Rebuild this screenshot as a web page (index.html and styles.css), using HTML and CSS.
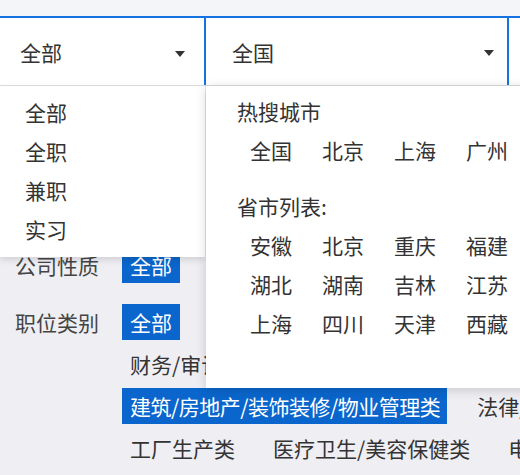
FILE: index.html
```html
<!DOCTYPE html>
<html lang="zh-CN">
<head>
<meta charset="utf-8">
<title>职位筛选</title>
<link rel="stylesheet" href="styles.css">
</head>
<body>
<div class="page">
  <div class="topband"></div>
  <div class="selectbar">
    <div class="select select-type"><span class="select-text">全部</span><i class="caret"></i></div>
    <div class="select select-city"><span class="select-text">全国</span><i class="caret"></i></div>
    <div class="select select-more"></div>
  </div>

  <div class="filters">
    <div class="filter-row nature">
      <div class="filter-label">公司性质</div>
      <div class="chip-lines">
        <div class="chip-line"><span class="chip active">全部</span></div>
      </div>
    </div>
    <div class="filter-row">
      <div class="filter-label">职位类别</div>
      <div class="chip-lines">
        <div class="chip-line"><span class="chip active">全部</span></div>
        <div class="chip-line"><span class="chip">财务/审计/税务</span></div>
        <div class="chip-line"><span class="chip active chip-tight">建筑/房地产/装饰装修/物业管理类</span><span class="chip">法律/教育/翻译</span></div>
        <div class="chip-line"><span class="chip">工厂生产类</span><span class="chip">医疗卫生/美容保健类</span><span class="chip">电子/通信</span></div>
      </div>
    </div>
  </div>

  <ul class="menu menu-type">
    <li>全部</li>
    <li>全职</li>
    <li>兼职</li>
    <li>实习</li>
  </ul>

  <div class="menu menu-city">
    <div class="city-title">热搜城市</div>
    <div class="city-grid">
      <span>全国</span><span>北京</span><span>上海</span><span>广州</span>
    </div>
    <div class="city-title province-title">省市列表:</div>
    <div class="city-grid">
      <span>安徽</span><span>北京</span><span>重庆</span><span>福建</span>
      <span>湖北</span><span>湖南</span><span>吉林</span><span>江苏</span>
      <span>上海</span><span>四川</span><span>天津</span><span>西藏</span>
    </div>
  </div>
</div>
</body>
</html>
```

FILE: styles.css
```css
html, body {
  margin: 0;
  padding: 0;
  overflow: hidden;
}

body {
  background: #eeeef3;
  font-family: "Noto Sans CJK SC", "Microsoft YaHei", sans-serif;
  font-size: 21px;
  color: #333;
}

.page {
  position: relative;
  width: 520px;
  height: 475px;
  overflow: hidden;
}

.topband {
  height: 16px;
  background: #f4f5f9;
}

.selectbar {
  display: flex;
  height: 67px;
  background: #fff;
  border-top: 2px solid #1671e3;
  border-bottom: 1px solid #dcdcdf;
  box-shadow: 0 1px 2px rgba(0, 0, 0, 0.06);
}

.select {
  display: flex;
  align-items: center;
  flex: none;
  box-sizing: border-box;
  height: 100%;
  padding-left: 26px;
  border-right: 2px solid #1671e3;
}

.select-type {
  margin-left: -6px;
  width: 212px;
  padding-right: 19px;
}

.select-city {
  width: 303px;
  padding-right: 13px;
}

.select-more {
  width: 120px;
  border-right: none;
}

.select-text {
  line-height: 30px;
}

.caret {
  margin-left: auto;
  margin-top: 4px;
  width: 0;
  height: 0;
  border-left: 5.5px solid transparent;
  border-right: 5.5px solid transparent;
  border-top: 6px solid #333;
}

.select-city .caret {
  margin-top: 2px;
}

.filters {
  padding-top: 161px;
  color: #444;
}

.filter-row {
  display: flex;
  align-items: flex-start;
}

.filter-row.nature {
  margin-bottom: 21px;
}

.filter-label {
  flex: none;
  box-sizing: border-box;
  width: 122px;
  padding-left: 15px;
  line-height: 36px;
}

.chip-lines {
  display: flex;
  flex-direction: column;
  gap: 6px;
}

.chip-line {
  display: flex;
  gap: 22px;
  white-space: nowrap;
}

.chip {
  padding: 0 8px;
  line-height: 36px;
  color: #333;
}

.chip.active {
  background: #0a66cc;
  color: #fff;
}

.chip-tight {
  letter-spacing: -0.5px;
  padding-right: 7px;
}

.menu {
  position: absolute;
  top: 86px;
  margin: 0;
  background: #fff;
  box-sizing: border-box;
  color: #333;
}

.menu-type {
  left: 0;
  width: 205px;
  height: 171px;
  list-style: none;
  padding: 7px 0 0 25px;
  box-shadow: 0 3px 6px rgba(0, 0, 0, 0.12);
  z-index: 1;
}

.menu-type li {
  line-height: 39px;
}

.menu-city {
  left: 206px;
  width: 330px;
  height: 302px;
  padding: 5px 0 0 31px;
  box-shadow: 0 2px 10px rgba(0, 0, 0, 0.16);
  z-index: 2;
}

.city-title {
  line-height: 40px;
}

.province-title {
  margin-top: 16px;
}

.city-grid {
  display: grid;
  grid-template-columns: repeat(4, 72px);
  padding-left: 13px;
  line-height: 39px;
}
```
